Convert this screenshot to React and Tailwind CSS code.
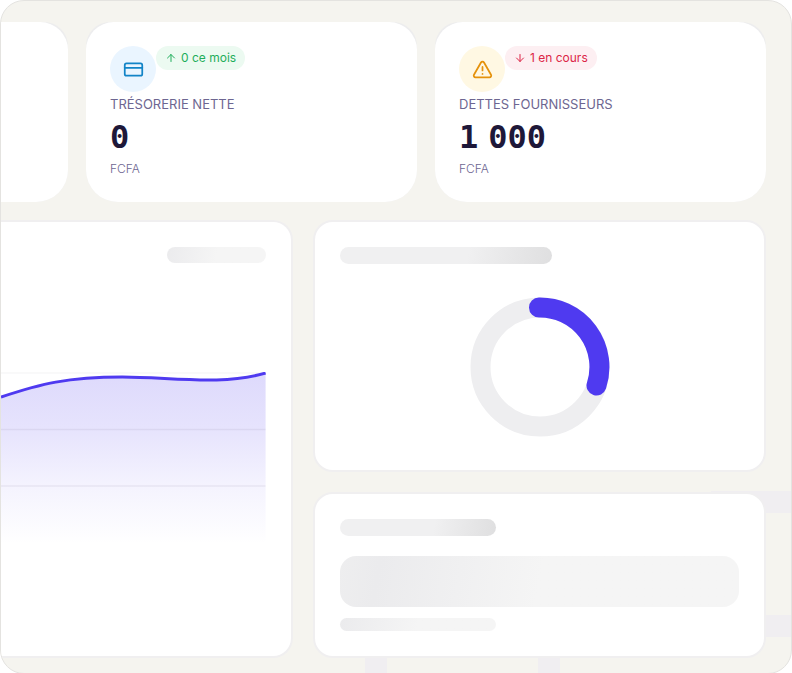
import { ArrowDown, ArrowUp, CreditCard, TriangleAlert } from "lucide-react";
import clsx from "clsx";

const stats = [
  {
    label: "Trésorerie nette",
    value: ["0"],
    unit: "FCFA",
    trend: "0 ce mois",
    icon: CreditCard,
    trendIcon: ArrowUp,
    iconClass: "bg-[#eaf5ff] text-[#1284c7]",
    trendClass: "bg-[#ecfaf1] text-[#1fae5b]"
  },
  {
    label: "Dettes fournisseurs",
    value: ["1", "000"],
    unit: "FCFA",
    trend: "1 en cours",
    icon: TriangleAlert,
    trendIcon: ArrowDown,
    iconClass: "bg-[#fff8e3] text-[#e5920c]",
    trendClass: "bg-[#fdeff2] text-[#dc2546]"
  }
];

function StatCard({ stat }) {
  const Icon = stat.icon;
  const TrendIcon = stat.trendIcon;

  return (
    <article className="rounded-t-3xl rounded-b-[32px] bg-[#ededee]">
      <div className="h-full rounded-t-[28px] rounded-b-[32px] bg-white px-6 pt-6 pb-[25px]">
        <div className="flex items-start">
          <span className={clsx("flex size-[46px] items-center justify-center rounded-full", stat.iconClass)}>
            <Icon size={21} />
          </span>
          <span
            className={clsx(
              "flex h-6 items-center gap-1 rounded-full px-[9px] text-[12px] whitespace-nowrap",
              stat.trendClass
            )}
          >
            <TrendIcon size={12} />
            {stat.trend}
          </span>
        </div>
        <h2 className="mt-1 text-[13px] leading-4 text-[#6d6691] uppercase">{stat.label}</h2>
        {/* thousands groups are set apart by a narrow gap */}
        <p className="mt-2 flex gap-[10px] font-['DejaVu_Sans_Mono',monospace] text-[32px] leading-[34px] font-bold text-[#1e1839]">
          {stat.value.map((group) => (
            <span key={group}>{group}</span>
          ))}
        </p>
        <p className="mt-[7px] text-[12px] leading-4 font-light text-[#6d6691]">{stat.unit}</p>
      </div>
    </article>
  );
}

function Panel({ className, children }) {
  return (
    <section className={clsx("border-2 border-[#f0eff0] bg-white", className)}>{children}</section>
  );
}

function Skeleton({ className }) {
  return <div className={clsx("bg-linear-100", className)} />;
}

function TrendChart() {
  return (
    <svg className="mt-[109px] block h-[172px] w-full" viewBox="0 0 266 172" preserveAspectRatio="none">
      <defs>
        <linearGradient id="area" x1="0" y1="0" x2="0" y2="1">
          <stop offset="0" stopColor="#4f3af0" stopOpacity="0.19" />
          <stop offset="0.33" stopColor="#4f3af0" stopOpacity="0.14" />
          <stop offset="0.66" stopColor="#4f3af0" stopOpacity="0.06" />
          <stop offset="1" stopColor="#4f3af0" stopOpacity="0" />
        </linearGradient>
      </defs>
      <path d="M0 1H266" stroke="#f3f3f4" />
      <path d="M0 25C40 12 66 5 122 5C170 5 222 14 266 1V172H0Z" fill="url(#area)" />
      <path d="M0 57.500H266M0 114H266" stroke="#1e1839" strokeOpacity="0.06" strokeWidth="1.500" />
      <path d="M0 25C40 12 66 5 122 5C170 5 222 14 266 1" fill="none" stroke="#4f3af0" strokeWidth="3" />
    </svg>
  );
}

function Donut() {
  return (
    <svg className="mx-auto mt-8 block size-[142px]" viewBox="0 0 142 142" fill="none" strokeWidth="20">
      <circle cx="72" cy="71" r="59.500" stroke="#eeeef0" />
      <path d="M71 11.500A59.500 59.500 0 0 1 128.500 89.500" stroke="#4f3af0" strokeLinecap="round" />
    </svg>
  );
}

function App() {
  return (
    <main className="relative overflow-hidden rounded-3xl border border-[#e4e3e0] bg-[#f5f4ef] pt-[21px] pb-[15px] font-[Inter,sans-serif]">
      <div className="absolute top-[490px] right-0 h-[22px] w-[80px] bg-[#f0eef1]" />
      <div className="absolute top-[614px] right-0 h-[22px] w-[80px] bg-[#f0eef1]" />
      <div className="absolute bottom-0 left-[364px] h-10 w-[22px] bg-[#f0eef1]" />
      <div className="absolute bottom-0 left-[537px] h-10 w-[22px] bg-[#f0eef1]" />

      <div className="relative grid grid-cols-[67px_1fr_1fr] gap-[18px] pr-[25px]">
        <article className="rounded-tr-3xl rounded-br-[32px] bg-[#ededee]">
          <div className="h-full rounded-tr-[28px] rounded-br-[32px] bg-white" />
        </article>
        {stats.map((stat) => (
          <StatCard key={stat.label} stat={stat} />
        ))}
      </div>

      <div className="relative mt-[18px] grid grid-cols-[292fr_454fr] gap-5 pr-[25px]">
        <Panel className="rounded-r-[20px] border-l-0 pt-[25px] pr-[25px]">
          <Skeleton className="ml-auto h-4 w-[99px] rounded-full from-[#ebebed] to-[#f5f5f5] to-50%" />
          <TrendChart />
        </Panel>

        <div className="flex flex-col gap-5">
          <Panel className="rounded-[20px] px-[25px] pt-[25px] pb-8">
            <Skeleton className="h-[17px] w-[212px] rounded-full from-[#f0f0f1] from-60% to-[#dfdfe0]" />
            <Donut />
          </Panel>
          <Panel className="rounded-[20px] p-[25px]">
            <Skeleton className="h-[17px] w-[156px] rounded-full from-[#f0f0f1] from-60% to-[#dfdfe0]" />
            <Skeleton className="mt-5 h-[51px] rounded-2xl from-[#eeeeef] via-[#ebebed] via-10% to-[#f5f5f5] to-50%" />
            <Skeleton className="mt-[11px] h-[13px] w-[156px] rounded-full from-[#ebebed] to-[#f5f5f5] to-50%" />
          </Panel>
        </div>
      </div>
    </main>
  );
}

export default App;
